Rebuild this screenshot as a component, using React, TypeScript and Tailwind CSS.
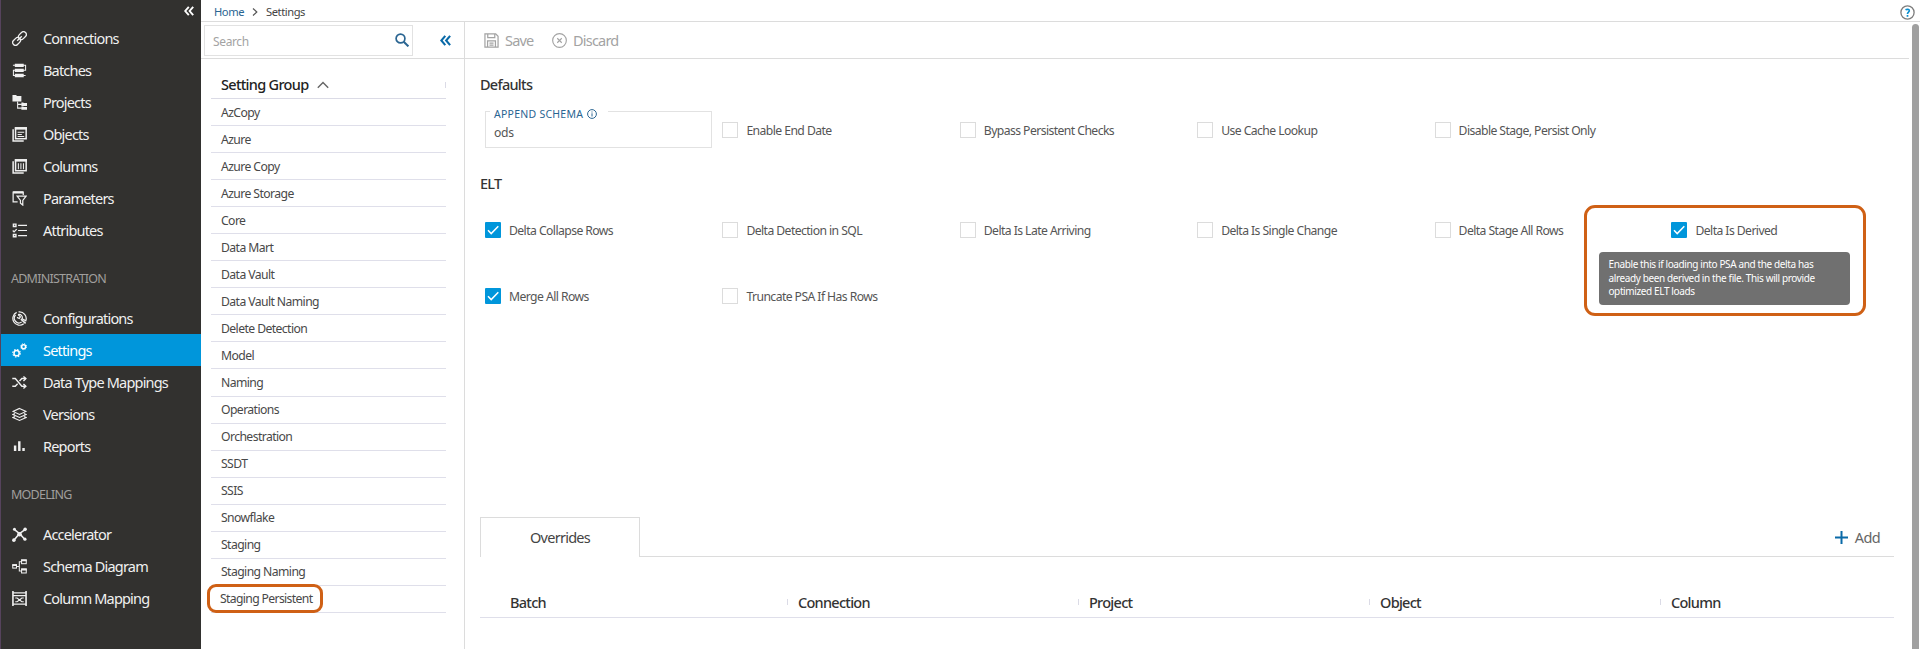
import React from "react";

type IconProps = { children: React.ReactNode; className?: string };

function Glyph({ children, className = "" }: IconProps) {
  return (
    <svg viewBox="0 0 16 16" fill="none" stroke="currentColor" strokeWidth="1.1" className={"h-[15px] w-[15px] shrink-0 " + className}>
      {children}
    </svg>
  );
}

const icons: Record<string, React.ReactNode> = {
  Connections: (
    <g transform="rotate(-45 8 8)" strokeWidth="1.4">
      <rect x="-1" y="5" width="9.2" height="6" rx="3" />
      <rect x="7.8" y="5" width="9.2" height="6" rx="3" />
      <path d="M4.5 8h7" />
    </g>
  ),
  Batches: (
    <g>
      <path d="M1 2.5h13.500v5.300H1.500v5.500h13" strokeWidth="1.1" />
      <path d="M3 .7h9.500v3.600H3zM3 6h9.500v3.600H3zM3 11.500h9.500v3.600H3z" fill="currentColor" stroke="none" />
    </g>
  ),
  Projects: (
    <g>
      <path d="M.5 0h3.800l1 1H10v6H.5z" fill="currentColor" stroke="none" />
      <path d="M6 7v7H10.500M6 10H10.500" />
      <path d="M10 8h2l.5.6H16v3h-6zM10 12.300h2l.5.5H16v3h-6z" fill="currentColor" stroke="none" />
    </g>
  ),
  Objects: (
    <g>
      <path d="M1.200 2.500v12.300h11.300" strokeWidth="1.600" />
      <rect x="3.800" y="1" width="11.300" height="11.500" strokeWidth="1.600" />
      <path d="M3 1.500h13" strokeWidth="2.600" />
      <path d="M6 5.600h7M6 7.900h4.500M6 10.200h7" />
    </g>
  ),
  Columns: (
    <g>
      <path d="M1.200 2.500v12.300h11.300" strokeWidth="1.600" />
      <rect x="3.800" y="1" width="11.300" height="11.500" strokeWidth="1.600" />
      <path d="M3 1.500h13" strokeWidth="2.600" />
      <path d="M6.800 4.500v6.500M9.500 4.500v6.500M12.200 4.500v6.500" />
    </g>
  ),
  Parameters: (
    <g>
      <path d="M6 11.500H1.200V1.200h10.800v3" strokeWidth="1.300" />
      <path d="M1.200 1.500h10.800" strokeWidth="2.400" />
      <path d="M5.500 5.500h9.500l-3.500 4.500v5L9 13v-3z" strokeWidth="1.300" />
    </g>
  ),
  Attributes: (
    <g>
      <path d="M6.500 2.500H16M6.500 8H16M6.500 13.500H16" strokeWidth="1.300" />
      <path d="M1.500 1.200H4.200v2.500H1.500zM1.500 12.200H4.200v2.500H1.500z" strokeWidth="1.500" />
      <path d="M.8 8l1.400 1.500L5 6.500" strokeWidth="1.400" />
    </g>
  ),
  Configurations: (
    <g strokeWidth="1.300">
      <path d="M5 1.500A7.200 7.200 0 1 0 12.500 13.700" />
      <path d="M7 .9A7.200 7.200 0 0 1 14.700 10.500L10.800 8.200a3.400 3.400 0 0 0-4.300-4.400" />
      <path d="M3.800 4.300a5 5 0 0 0 6.500 7.500" />
      <path d="M6.500 3.800L9 6.300 7.800 8 5.300 6.800" />
      <path d="M9.500 8.700l5 4.500" strokeWidth="1.700" />
    </g>
  ),
  Settings: (
    <g>
      <circle cx="4.900" cy="10.900" r="2.800" strokeWidth="1.600" />
      <circle cx="4.900" cy="10.900" r="4.100" strokeWidth="1.100" strokeDasharray="1.610 1.610" />
      <circle cx="12.400" cy="3.900" r="2.100" strokeWidth="1.600" />
      <circle cx="12.400" cy="3.900" r="3.200" strokeWidth="1" strokeDasharray="1.257 1.257" />
    </g>
  ),
  "Data Type Mappings": (
    <g strokeWidth="1.500">
      <path d="M.3 3.800H3.500L10.500 12H14.500M.3 12H3.500L6 9.300M8 6.500L10.500 3.800H14.500" />
      <path d="M12.200 1.500L14.800 3.800l-2.600 2.500M12.200 9.500l2.600 2.500-2.600 2.500" />
    </g>
  ),
  Versions: (
    <g strokeWidth="1.200">
      <path d="M8 1.500l7 3.200L8 8 1 4.700z" />
      <path d="M3.300 7L1 8 8 11.200 15 8l-2.300-1M3.300 10.200L1 11.200l7 3.200 7-3.200-2.300-1" />
    </g>
  ),
  Reports: <path d="M3.300 7v5.800M7.800 2.500v10.300M12.300 9.500v3.300" strokeWidth="2.600" />,
  Accelerator: (
    <g>
      <path d="M3 3l5 4 5.500-4M2.500 13.500L8 7l5 5.500" strokeWidth="1.700" />
      <g fill="currentColor" stroke="none">
        <circle cx="2.600" cy="2.300" r="1.600" />
        <circle cx="14" cy="2.500" r="1.900" />
        <circle cx="8" cy="7.700" r="2.500" />
        <circle cx="2" cy="14" r="1.900" />
        <circle cx="13.800" cy="13" r="1.700" />
      </g>
    </g>
  ),
  "Schema Diagram": (
    <g>
      <path d="M4.500 8H7.500M10 3H7.800V12.800H10" strokeWidth="1.100" />
      <rect x=".8" y="6.200" width="4" height="3.500" />
      <rect x="10.200" y="1" width="5" height="4" />
      <rect x="10.200" y="10.700" width="5" height="4.200" />
      <path d="M.3 6.500h5M9.700 1.500h6M9.700 11.200h6" strokeWidth="2" />
    </g>
  ),
  "Column Mapping": (
    <g>
      <path d="M1 0v16M15 0v16" strokeWidth="1.700" />
      <path d="M1 2h14M1 5h14M1 14h14" strokeWidth="1.300" />
      <path d="M3.500 7.500h2l5 4h2M3.500 11.500h2l5-4h2" strokeWidth="1.200" />
    </g>
  ),
};

const adminItems = ["Configurations", "Settings", "Data Type Mappings", "Versions", "Reports"];
const mainItems = ["Connections", "Batches", "Projects", "Objects", "Columns", "Parameters", "Attributes"];
const modelItems = ["Accelerator", "Schema Diagram", "Column Mapping"];

function NavList({ items }: { items: string[] }) {
  return (
    <nav>
      {items.map((name) => (
        <a
          key={name}
          className={
            "flex h-8 items-center gap-4 pl-[11px] text-[14.5px] tracking-[-0.056em] " +
            (name === "Settings" ? "bg-[#0096db] text-white" : "text-[#f0f0f0]")
          }
        >
          <Glyph>{icons[name]}</Glyph>
          <span className="pt-[2px] whitespace-nowrap">{name}</span>
        </a>
      ))}
    </nav>
  );
}

function Chevrons({ className }: { className: string }) {
  return (
    <svg viewBox="0 0 10 10" fill="none" stroke="currentColor" strokeWidth="1.900" className={className}>
      <path d="M4.800.8L1.200 5l3.600 4.200M9.200.8L5.600 5l3.600 4.200" />
    </svg>
  );
}

function NavHeading({ children }: { children: React.ReactNode }) {
  return (
    <div className="h-[56px] pt-[13px] pl-[10px] text-[12.500px] leading-[40px] tracking-[-0.06em] text-[#a09f9d]">
      {children}
    </div>
  );
}

function Sidebar() {
  return (
    <aside className="flex w-[201px] shrink-0 flex-col border-l border-[#56435c] bg-[#32312f]">
      <div className="flex h-[22px] items-center justify-end pr-[7px] text-white">
        <Chevrons className="h-[10px] w-[10px]" />
      </div>
      <NavList items={mainItems} />
      <NavHeading>ADMINISTRATION</NavHeading>
      <NavList items={adminItems} />
      <NavHeading>MODELING</NavHeading>
      <NavList items={modelItems} />
    </aside>
  );
}

const groups = [
  "AzCopy", "Azure", "Azure Copy", "Azure Storage", "Core", "Data Mart", "Data Vault", "Data Vault Naming",
  "Delete Detection", "Model", "Naming", "Operations", "Orchestration", "SSDT", "SSIS", "Snowflake", "Staging",
  "Staging Naming", "Staging Persistent",
];

function GroupPanel() {
  return (
    <section className="w-[264px] shrink-0 border-r border-[#dcdcdc]">
      <div className="flex h-[37px] items-center border-b border-[#dcdcdc] pl-[3px]">
        <div className="flex h-[31px] w-[209px] items-center justify-between border border-[#e2e2e2] pr-[3px] pl-2">
          <span className="pt-[3px] text-[12px] tracking-[-0.03em] text-[#a3a3a3]">Search</span>
          <svg viewBox="0 0 14 14" fill="none" stroke="#2a6592" strokeWidth="1.700" className="h-[14px] w-[14px]">
            <circle cx="5.500" cy="5.500" r="4.400" />
            <path d="M8.700 8.700l4.700 4.700" strokeWidth="2" />
          </svg>
        </div>
        <Chevrons className="ml-[27px] h-[11px] w-[11px] text-[#0a6aa8]" />
      </div>
      <div className="ml-[10px] w-[235px] pt-[13px]">
        <div className="flex h-[27px] items-center border-b border-[#dbdbe6] pl-[10px]">
          <span className="text-[14.500px] font-medium tracking-[-0.048em] text-[#222]">Setting Group</span>
          <svg viewBox="0 0 12 8" fill="none" stroke="#666" strokeWidth="1.400" className="ml-[9px] h-2 w-3">
            <path d="M.8 6.800L6 1.500l5.200 5.300" />
          </svg>
          <span className="ml-auto h-1.5 w-px bg-[#dbdbe6]" />
        </div>
        {groups.map((g) => (
          <div key={g} className="relative flex h-[27.050px] items-center border-b border-[#dfdfea] pl-[10px]">
            <span
              className={
                "pt-[1.4px] text-[12.200px] text-[#484848] " +
                (g === "Staging Persistent" ? "-ml-px tracking-[-0.053em]" : "tracking-[-0.048em]")
              }
            >
              {g}
            </span>
            {g === "Staging Persistent" && (
              <div className="absolute -top-[2px] -left-[4px] h-[29px] w-[116px] rounded-[9px] border-[3px] border-[#cf6015]" />
            )}
          </div>
        ))}
      </div>
    </section>
  );
}

function Check({ label, on = false }: { label: string; on?: boolean }) {
  return (
    <label className="flex h-4 w-[237.400px] shrink-0 items-center gap-2">
      {on ? (
        <span className="flex h-4 w-4 items-center justify-center rounded-[1px] bg-[#0096db]">
          <svg viewBox="0 0 16 16" fill="none" stroke="#fff" strokeWidth="1.500" className="h-4 w-4">
            <path d="M3 8.300l3.200 3.300L13.300 4.300" />
          </svg>
        </span>
      ) : (
        <span className="h-4 w-4 border border-[#dcdcdc] bg-white" />
      )}
      <span className="pt-[2px] whitespace-nowrap text-[12.200px] tracking-[-0.047em] text-[#555]">{label}</span>
    </label>
  );
}

function Toolbar() {
  return (
    <div className="mr-[3px] flex h-[37px] items-center border-b border-[#dcdcdc] pt-px pl-[19px] text-[14.500px] tracking-[-0.055em] text-[#a3a3a3]">
      <svg viewBox="0 0 16 16" fill="none" stroke="currentColor" strokeWidth="1.300" className="h-[15px] w-[15px]">
        <path d="M1 1h11.500L15 3.500V15H1zM4 1v4h7.500V1M3.800 15V8.500h8.400V15M5.800 10.800h4.400M5.800 13h4.400" />
      </svg>
      <span className="ml-[6px] w-[29px] pt-px">Save</span>
      <svg viewBox="0 0 16 16" fill="none" stroke="currentColor" strokeWidth="1.200" className="ml-[18px] h-[15px] w-[15px]">
        <circle cx="8" cy="8" r="7.300" />
        <path d="M5.600 5.600l4.800 4.800M10.400 5.600l-4.800 4.800" />
      </svg>
      <span className="ml-[6px] pt-px">Discard</span>
    </div>
  );
}

const heading = "text-[14.500px] leading-[20px] font-medium tracking-[-0.050em] text-[#333]";

function Overrides() {
  return (
    <div className="mr-[18px]">
      <div className="flex h-[40px]">
        <div className="flex w-[160px] items-center justify-center border-x border-t border-[#dcdcdc] text-[14.500px] tracking-[-0.050em] text-[#444]">
          Overrides
        </div>
        <div className="flex flex-1 items-center justify-end border-b border-[#dcdcdc] pt-[2px] pr-[14px] text-[14.500px] tracking-[-0.045em] text-[#666]">
          <svg viewBox="0 0 13 13" stroke="#0a6aa8" strokeWidth="2" className="mr-[7px] h-[13px] w-[13px]">
            <path d="M6.500 0v13M0 6.500h13" />
          </svg>
          Add
        </div>
      </div>
      <div className="mt-[30px] flex h-[31px] items-center border-b border-[#dfdfea] pl-[19px]">
        {["Batch", "Connection", "Project", "Object", "Column"].map((c, i) => (
          <div key={c} className="flex w-[291px] shrink-0 items-center first:w-[288px] last:w-auto">
            <span className={i === 0 ? "w-[11px]" : "mr-[10px] h-1.5 w-px bg-[#dbdbe6]"} />
            <span className={heading}>{c}</span>
          </div>
        ))}
      </div>
    </div>
  );
}

export default function App() {
  return (
    <div className="flex h-[649px] w-[1920px] overflow-hidden bg-white font-['Noto_Sans','Open_Sans',sans-serif]">
      <Sidebar />
      <div className="flex min-w-0 flex-1 flex-col">
        <header className="flex h-[22px] shrink-0 items-center border-b border-[#dcdcdc] pt-[3px] pl-[13px] text-[11.200px] tracking-[-0.040em]">
          <span className="text-[#2a6592]">Home</span>
          <svg viewBox="0 0 6 8" fill="none" stroke="#555" strokeWidth="1.200" className="mx-[8px] h-2 w-1.5">
            <path d="M1 .5L4.800 4 1 7.500" />
          </svg>
          <span className="text-[#444]">Settings</span>
          <svg viewBox="0 0 15 15" fill="none" stroke="#0a8fd0" strokeWidth="1.700" className="mr-[5px] ml-auto h-[15px] w-[15px]">
            <circle cx="7.500" cy="7.500" r="6.600" stroke="#7d7d7d" strokeWidth="1.300" />
            <path d="M5.500 4.800C6.800 4 9.500 4 9.300 5.900 9.100 7.200 7.500 7 7.500 8.900M7.500 10v1.700" />
          </svg>
        </header>
        <div className="flex min-h-0 flex-1">
          <GroupPanel />
          <div className="flex min-w-0 flex-1 flex-col">
            <Toolbar />
            <div className="flex min-h-0 flex-1 flex-col pl-[15px]">
              <h2 className={"mt-[15px] " + heading}>Defaults</h2>
              <div className="mt-[17px] flex h-[37px] items-center pl-[5px]">
                <div className="relative mr-[10.400px] flex h-[37px] w-[227px] shrink-0 items-center border border-[#e2e2e2] pt-[7px] pl-2">
                  <span className="text-[12.200px] tracking-[-0.03em] text-[#555]">ods</span>
                  <div className="absolute -top-[6px] left-[4px] flex w-[118px] items-center bg-white pl-1 text-[10.500px] leading-[16px] tracking-[0.024em] text-[#2a6592]">
                    <span className="whitespace-nowrap">APPEND SCHEMA</span>
                    <svg viewBox="0 0 10 10" fill="none" stroke="currentColor" className="ml-[4px] h-[10px] w-[10px]">
                      <circle cx="5" cy="5" r="4.400" strokeWidth="1" />
                      <path d="M5 4.300v3.200M5 2.500v1" strokeWidth="1" />
                    </svg>
                  </div>
                </div>
                {["Enable End Date", "Bypass Persistent Checks", "Use Cache Lookup", "Disable Stage, Persist Only"].map((l) => (
                  <div key={l} className="pt-px">
                    <Check label={l} />
                  </div>
                ))}
              </div>
              <h2 className={"mt-[25px] " + heading}>ELT</h2>
              <div className="mt-[29px] flex h-4 pl-[5px]">
                <Check label="Delta Collapse Rows" on />
                <Check label="Delta Detection in SQL" />
                <Check label="Delta Is Late Arriving" />
                <Check label="Delta Is Single Change" />
                <Check label="Delta Stage All Rows" />
                <div className="relative -ml-[0.500px]">
                  <Check label="Delta Is Derived" on />
                  <div className="absolute -top-[17px] -left-[87px] h-[111px] w-[282px] rounded-[11px] border-[3px] border-[#cf6015]" />
                  <div className="absolute top-[30px] -left-[72px] h-[53px] w-[251px] rounded-[4px] bg-[#707070] px-[9px] pt-[6px] text-[10px] leading-[13.600px] tracking-[-0.038em] whitespace-nowrap text-white">
                    Enable this if loading into PSA and the delta has
                    <br />
                    already been derived in the file. This will provide
                    <br />
                    optimized ELT loads
                  </div>
                </div>
              </div>
              <div className="mt-[50px] flex h-4 pl-[5px]">
                <Check label="Merge All Rows" on />
                <Check label="Truncate PSA If Has Rows" />
              </div>
              <div className="mt-auto mb-[31px]">
                <Overrides />
              </div>
            </div>
          </div>
          <div className="mt-[2px] mr-px w-[7px] shrink-0 rounded-t-full bg-[#a0a0a0]" />
        </div>
      </div>
    </div>
  );
}
